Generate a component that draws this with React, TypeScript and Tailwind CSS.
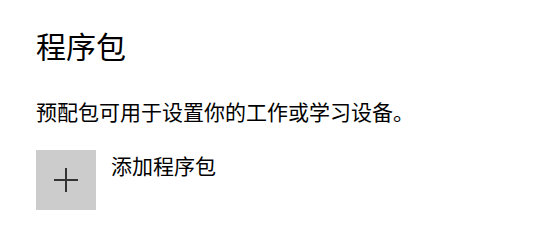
import React from "react";

export default function App() {
  return (
    <div
      className="w-[552px] h-[240px] bg-white text-black overflow-hidden pl-[36px] pt-[25px]"
      style={{ fontFamily: '"Noto Sans CJK SC", "Noto Sans", sans-serif' }}
    >
      <h1 className="text-[30px] leading-[40px] font-normal">程序包</h1>
      <p className="mt-[32px] text-[21px] leading-[28px]">预配包可用于设置你的工作或学习设备。</p>
      <div className="mt-[25px] flex items-start gap-[15px]">
        <button className="w-[60px] h-[60px] bg-[#cccccc] flex items-center justify-center">
          <svg width="24" height="24" viewBox="0 0 24 24">
            <path d="M12 0V24M0 12H24" stroke="#333333" strokeWidth="2" fill="none" />
          </svg>
        </button>
        <span className="text-[21px] leading-[28px] pt-px">添加程序包</span>
      </div>
    </div>
  );
}
